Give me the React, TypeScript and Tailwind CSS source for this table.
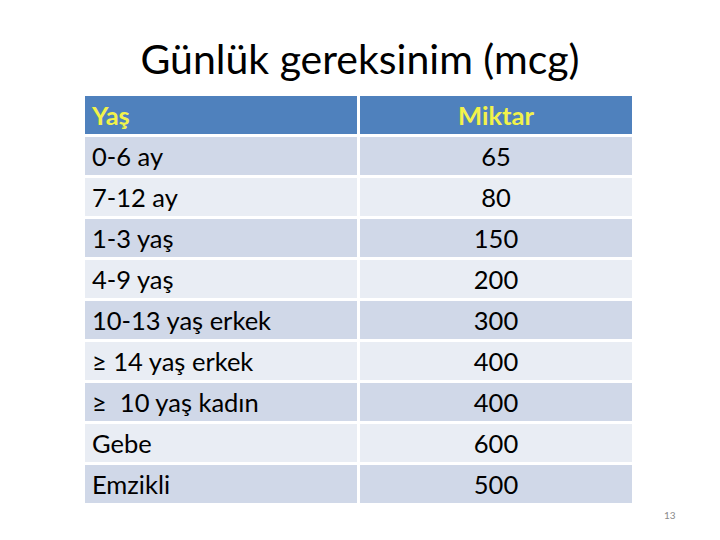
import { Fragment } from "react";

const rows: [string, string][] = [
  ["0-6 ay", "65"],
  ["7-12 ay", "80"],
  ["1-3 yaş", "150"],
  ["4-9 yaş", "200"],
  ["10-13 yaş erkek", "300"],
  ["≥ 14 yaş erkek", "400"],
  ["≥  10 yaş kadın", "400"],
  ["Gebe", "600"],
  ["Emzikli", "500"],
];

export default function App() {
  return (
    <div
      className="w-[720px] h-[540px] bg-white relative overflow-hidden"
      style={{ fontFamily: "Lato, 'Noto Sans', sans-serif" }}
    >
      <h1 className="text-center text-[41px] leading-none text-black pt-[38px]">
        Günlük gereksinim (mcg)
      </h1>

      <div className="ml-[85px] mt-[17px] w-[547px] grid grid-cols-[272px_272px] gap-[3px] text-[25.5px] text-black">
        <div className="h-[38px] bg-[#4f81bd] flex items-center pl-[7px] font-bold text-[#f2f24a]">
          Yaş
        </div>
        <div className="h-[38px] bg-[#4f81bd] flex items-center justify-center font-bold text-[#f2f24a]">
          Miktar
        </div>
        {rows.map(([age, amt], i) => (
          <Fragment key={age}>
            <div
              className={
                "h-[38px] flex items-center pl-[7px] whitespace-pre " +
                (i % 2 === 0 ? "bg-[#d0d8e8]" : "bg-[#e9edf4]")
              }
            >
              {age}
            </div>
            <div
              className={
                "h-[38px] flex items-center justify-center " +
                (i % 2 === 0 ? "bg-[#d0d8e8]" : "bg-[#e9edf4]")
              }
            >
              {amt}
            </div>
          </Fragment>
        ))}
      </div>

      <div className="absolute left-[664px] top-[508px] text-[10px] text-[#8a8a8a]">13</div>
    </div>
  );
}
